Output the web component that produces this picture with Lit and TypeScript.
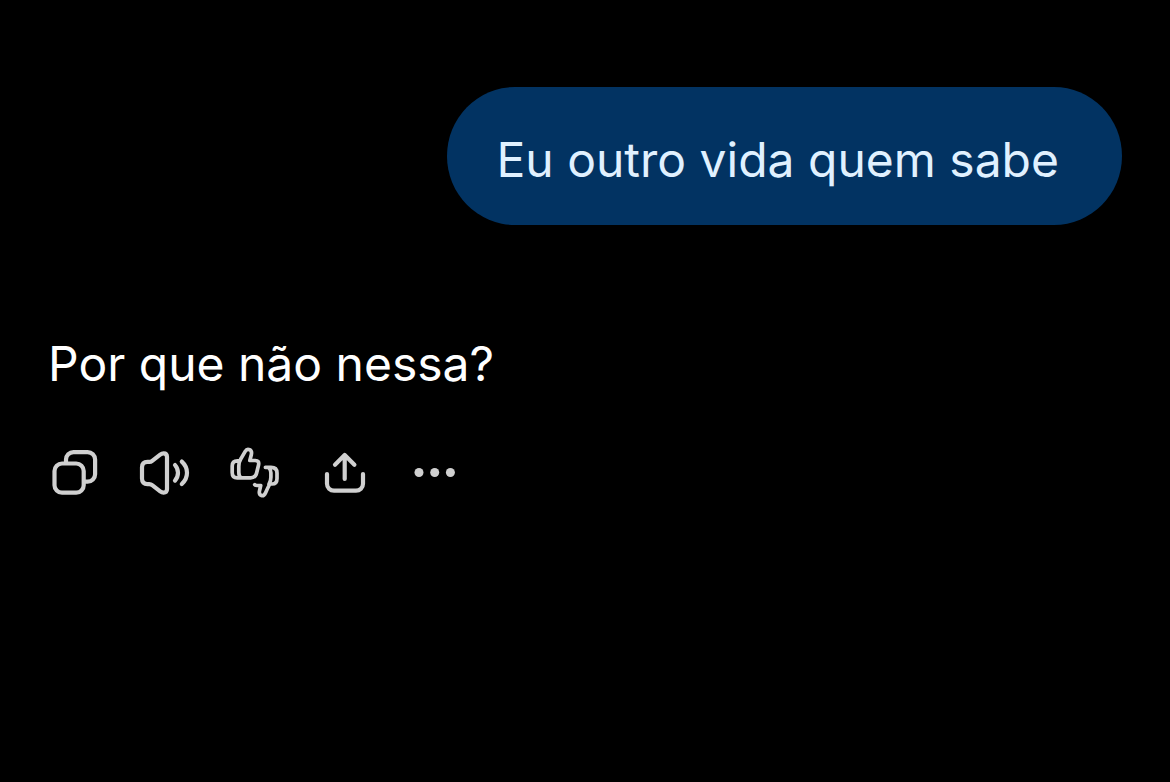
import { LitElement, html, css, svg } from "lit";
import { customElement, property } from "lit/decorators.js";

const icons: Record<string, unknown> = {
  copy: svg`
    <rect x="9.5" y="20.5" width="29.2" height="29.2" rx="7.5" />
    <path d="M21 19V16.6a7.5 7.5 0 0 1 7.5-7.5H42.6a7.5 7.5 0 0 1 7.5 7.5V31.2a7.5 7.5 0 0 1-7.5 7.5H40" />`,
  speak: svg`
    <path d="M12.5 18.9h1.800q1.600 0 2.900-1.100l8-6.200q1.600-1.200 3.400-1.200 3.400 0 3.400 3.600v32q0 3.600-3.400 3.600-1.800 0-3.400-1.200l-8-6.200q-1.300-1.100-2.900-1.100h-1.800Q7 41.100 7 35.600V24.400q0-5.500 5.500-5.500Z" />
    <path d="M40 22q3 3.500 3 7.800t-3 7.800M46.800 18.600q5.200 4.700 5.200 11.200t-5.200 11.200" />`,
  rate: svg`
    <g stroke-width="3.7">
      <path d="M14.500 17.800h-2Q7.200 17.800 7.200 23v6.400q0 5.400 5 5.400H25.600q4.900 0 6-4.800l1.900-7.800q1.100-4.700-3.300-4.700H24.800l1.500-5.800q.9-3.700-1.700-5-2.700-1.200-4.400 1.700L16 15.600q-2.200 3.500-2.200 7.600v6q0 4.200 2.400 5.600" />
      <path d="M40.400 24.300H46q6 0 6 5.600v5.500q0 5.600-5 5.600h-2.200q-2.200 4.100-4.100 8.400-1.800 4-4.300 3.100-2.700-1-1.900-4.700l1.200-5.300h-3.700q-1.700 0-2.300-.8M43.800 24.900q2.100 1.800 2.100 4.800v4.500q0 3.900-1.900 7.100" />
    </g>`,
  share: svg`
    <path d="M29.700 36V12M20 21.700l9.700-9.700 9.700 9.700M12 31v9.700a7 7 0 0 0 7 7H41a7 7 0 0 0 7-7V31" />`,
  more: svg`
    <g fill="currentColor" stroke="none">
      <circle cx="14" cy="29.500" r="4.500" />
      <circle cx="29.700" cy="29.500" r="4.500" />
      <circle cx="45.400" cy="29.500" r="4.500" />
    </g>`,
};

@customElement("action-button")
class ActionButton extends LitElement {
  @property() icon = "";
  @property() label = "";

  static styles = css`
    :host {
      display: block;
    }
    .button {
      display: block;
      padding: 0;
      border: 0;
      background: none;
      color: #d0d0d0;
      cursor: pointer;
    }
    .icon {
      display: block;
      width: 54px;
      height: 60px;
      fill: none;
      stroke: currentColor;
      stroke-width: 4.2;
      stroke-linecap: round;
      stroke-linejoin: round;
    }
  `;

  render() {
    return html`<button class="button" type="button" aria-label=${this.label}>
      <svg class="icon" viewBox="3 0 54 60" aria-hidden="true">${icons[this.icon]}</svg>
    </button>`;
  }
}

@customElement("app-root")
class AppRoot extends LitElement {
  static styles = css`
    :host {
      display: block;
      min-height: 100vh;
      box-sizing: border-box;
      padding: 87px 48px 48px;
      background: #000;
      color: #fff;
      font-family: Inter, "Liberation Sans", sans-serif;
      font-size: 48px;
      line-height: 66px;
    }
    .chat {
      display: flex;
      flex-direction: column;
      gap: 106px;
    }
    .message {
      margin: 0;
    }
    .sent {
      align-self: flex-end;
      padding: 40px 63px 32px 49px;
      border-radius: 68px / 69px;
      background: #023362;
      color: #e0f1ff;
    }
    .actions {
      display: flex;
      gap: 36px;
      margin-top: 46px;
    }
  `;

  render() {
    const actions = [
      ["copy", "Copiar"],
      ["speak", "Ouvir"],
      ["rate", "Avaliar"],
      ["share", "Compartilhar"],
      ["more", "Mais"],
    ];
    return html`<main class="chat">
      <p class="message sent">Eu outro vida quem sabe</p>
      <section>
        <p class="message">Por que não nessa?</p>
        <div class="actions">
          ${actions.map(([icon, label]) => html`<action-button .icon=${icon} .label=${label}></action-button>`)}
        </div>
      </section>
    </main>`;
  }
}
